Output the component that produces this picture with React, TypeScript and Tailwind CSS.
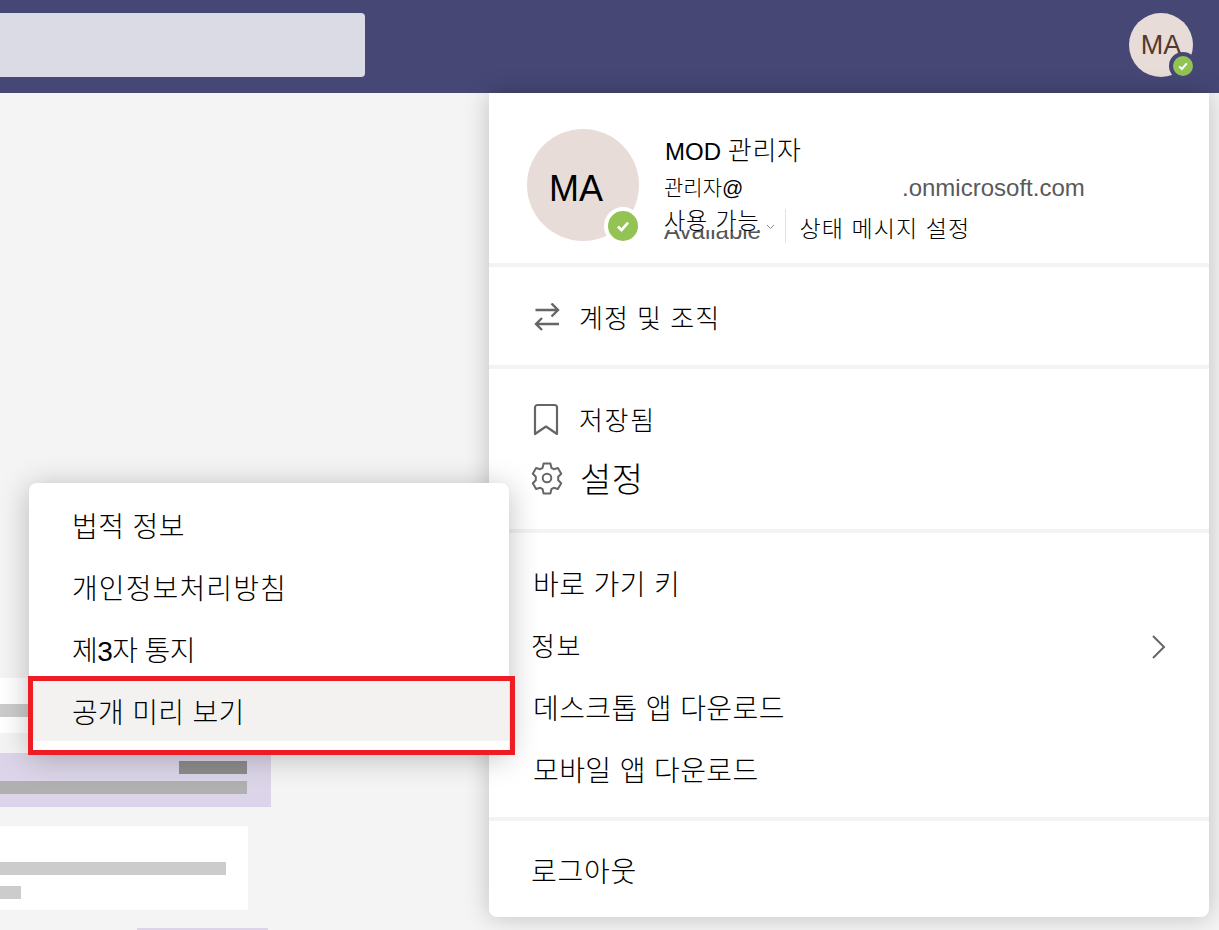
import React from "react";

const KR = "font-['Liberation_Sans','Noto_Sans_CJK_KR',sans-serif]";

function Check({ size }: { size: number }) {
  return (
    <svg width={size} height={size} viewBox="0 0 12 12" fill="none">
      <path d="M2.2 6.4 4.9 9 9.8 3.4" stroke="white" strokeWidth="2" />
    </svg>
  );
}

function SwapIcon() {
  return (
    <svg width="28" height="28" viewBox="0 0 28 28" fill="none" stroke="#666" strokeWidth="2.4">
      <path d="M2.500 7H25M18.500.5 25 7l-6.500 6.500" />
      <path d="M26 21H3M9 15l-6 6 6 6" />
    </svg>
  );
}

function BookmarkIcon() {
  return (
    <svg width="26" height="34" viewBox="0 0 26 34" fill="none" stroke="#666" strokeWidth="2.2">
      <path d="M2 31V4.500A2.500 2.500 0 0 1 4.500 2h17A2.500 2.500 0 0 1 24 4.500V31L13 23.500Z" strokeLinejoin="round" />
    </svg>
  );
}

function GearIcon() {
  return (
    <svg width="34" height="34" viewBox="0 0 34 34" fill="none" stroke="#666" strokeWidth="2">
      <path
        d="M13.600 2.600h6.800l1 4.200 2.400 1.400 4.100-1.200 3.300 5.800-3 3v3.400l3 3-3.300 5.800-4.100-1.200-2.400 1.400-1 4.200h-6.800l-1-4.200-2.400-1.400-4.100 1.200-3.300-5.800 3-3v-3.400l-3-3 3.300-5.800 4.100 1.200 2.400-1.400z"
        strokeLinejoin="round"
      />
      <circle cx="17" cy="17" r="4.300" />
    </svg>
  );
}

export default function App() {
  return (
    <div className={`relative h-[930px] w-[1219px] overflow-hidden bg-[#f4f4f4] ${KR} font-light text-black`}>
      <header className="flex h-[93px] items-center justify-between bg-[#464775] pr-[26px]">
        <div className="-mt-[3px] h-[64px] w-[365px] rounded-r bg-[#dbdbe5]" />
        <div className="relative -mt-[3px] flex h-[64px] w-[64px] items-center justify-center rounded-full bg-[#e8dcd8] text-[27px] text-[#54392d]">
          MA
          <span className="absolute -bottom-[3px] -right-[4px] flex h-[28px] w-[28px] items-center justify-center rounded-full border-[4px] border-[#464775] bg-[#92c353]">
            <Check size={12} />
          </span>
        </div>
      </header>

      <main className="flex w-[271px] flex-col pt-[585px]">
        <div className="flex h-[55px] w-[220px] items-center bg-white pt-[9px]">
          <div className="h-[13px] w-full bg-[#cbcbcb]" />
        </div>
        <div className="mt-[20px] flex h-[54px] flex-col items-end gap-[7px] bg-[#dcd5e9] pr-[24px] pt-[8px]">
          <div className="h-[13px] w-[68px] bg-[#8c8c8c]" />
          <div className="h-[13px] w-full bg-[#b0b0b0]" />
        </div>
        <div className="mt-[19px] flex h-[84px] w-[248px] flex-col gap-[11px] bg-white pt-[36px]">
          <div className="h-[13px] w-[226px] bg-[#cccccc]" />
          <div className="h-[13px] w-[21px] bg-[#cccccc]" />
        </div>
        <div className="ml-[137px] mt-[18px] h-[2px] w-[131px] bg-[#dcd5e9]" />
      </main>

      <section className="absolute left-[489px] top-[93px] flex h-[824px] w-[720px] flex-col rounded-b-lg bg-white shadow-[0_0_24px_rgba(0,0,0,0.22)]">
        <div className="flex h-[174px] border-b-4 border-[#f3f3f3] pl-[38px] pt-[36px]">
          <div className="relative flex h-[112px] w-[112px] items-center justify-center rounded-full bg-[#e8dcd8] pr-[14px] pt-[8px] text-[36px]">
            MA
            <span className="absolute -bottom-[4px] -right-[3px] flex h-[38px] w-[38px] items-center justify-center rounded-full border-[4px] border-white bg-[#92c353]">
              <Check size={16} />
            </span>
          </div>
          <div className="ml-[25px] flex flex-col pt-[5px]">
            <div className="ml-[1px] h-[35px] text-[24px] leading-[35px]">
              MOD <span className="text-[26px] tracking-[0.8px]">관리자</span>
            </div>
            <div className="flex h-[38px] items-center text-[21px]">
              <span className="w-[238px]">관리자@</span>
              <span className="text-[24px] text-[#5a5a5a]">.onmicrosoft.com</span>
            </div>
            <div className="-mt-[6px] flex h-[40px] items-center">
              <span className="relative text-[23px]">
                <span className="absolute left-0 top-[7px] text-[24px] leading-[24px] text-[#555]" aria-hidden>
                  Available
                </span>
                <span className="relative block h-[18px] bg-white leading-[18px] tracking-[0.9px]">사용 가능</span>
              </span>
              <svg className="ml-[6px] mt-[12px]" width="9" height="6" viewBox="0 0 9 6" fill="none" stroke="#888">
                <path d="M1 1l3.500 3.500L8 1" />
              </svg>
              <span className="ml-[10px] mt-[10px] h-[34px] w-[1px] bg-[#e3e3e3]" />
              <span className="ml-[14px] mt-[17px] text-[23px] tracking-[1.1px]">상태 메시지 설정</span>
            </div>
          </div>
        </div>

        <div className="flex h-[102px] items-center gap-[18px] border-b-4 border-[#f3f3f3] pl-[44px] pt-[2px]">
          <SwapIcon />
          <span className="pt-[4px] text-[26px] tracking-[1px]">계정 및 조직</span>
        </div>

        <div className="flex h-[164px] flex-col border-b-4 border-[#f3f3f3] pl-[44px] pt-[34px]">
          <div className="flex h-[34px] items-center gap-[20px]">
            <BookmarkIcon />
            <span className="pt-[2px] text-[26px] tracking-[1.7px]">저장됨</span>
          </div>
          <div className="ml-[-3px] mt-[20px] flex h-[42px] items-center gap-[16px]">
            <GearIcon />
            <span className="pt-[5px] text-[34px] tracking-[0.5px]">설정</span>
          </div>
        </div>

        <div className="flex h-[288px] flex-col border-b-4 border-[#f3f3f3] pl-[44px] pr-[42px] pt-[21px] text-[28px]">
          <div className="flex h-[62px] items-center pt-[2px] tracking-[0.4px]">바로 가기 키</div>
          <div className="-ml-[2px] flex h-[62px] items-center justify-between text-[26px] tracking-[1.5px]">
            정보
            <svg width="16" height="26" viewBox="0 0 16 26" fill="none" stroke="#666" strokeWidth="2">
              <path d="M2 2l11 11L2 24" />
            </svg>
          </div>
          <div className="flex h-[62px] items-center pt-[2px] tracking-[0.4px]">데스크톱 앱 다운로드</div>
          <div className="flex h-[62px] items-center pt-[2px] tracking-[0.4px]">모바일 앱 다운로드</div>
        </div>

        <div className="flex flex-1 items-center pl-[42px] pt-[8px] text-[28px] tracking-[0.75px]">로그아웃</div>
      </section>

      <section className="absolute left-[29px] top-[483px] flex h-[270px] w-[480px] flex-col rounded-lg bg-white pt-[12px] text-[28px] shadow-[0_4px_30px_rgba(0,0,0,0.25)]">
        <div className="flex h-[62px] items-center pl-[43px] pt-[4px] tracking-[0.4px]">법적 정보</div>
        <div className="flex h-[62px] items-center pl-[43px] pt-[4px] tracking-[1.1px]">개인정보처리방침</div>
        <div className="flex h-[62px] items-center pl-[43px] pt-[4px] tracking-[-0.6px]">제3자 통지</div>
        <div className="flex h-[60px] items-center bg-[#f3f2f1] pl-[43px] pt-[6px] tracking-[0.3px]">공개 미리 보기</div>
      </section>

      <div className="absolute left-[28px] top-[676px] h-[79px] w-[487px] border-[5px] border-[#ee1c25]" />
    </div>
  );
}
